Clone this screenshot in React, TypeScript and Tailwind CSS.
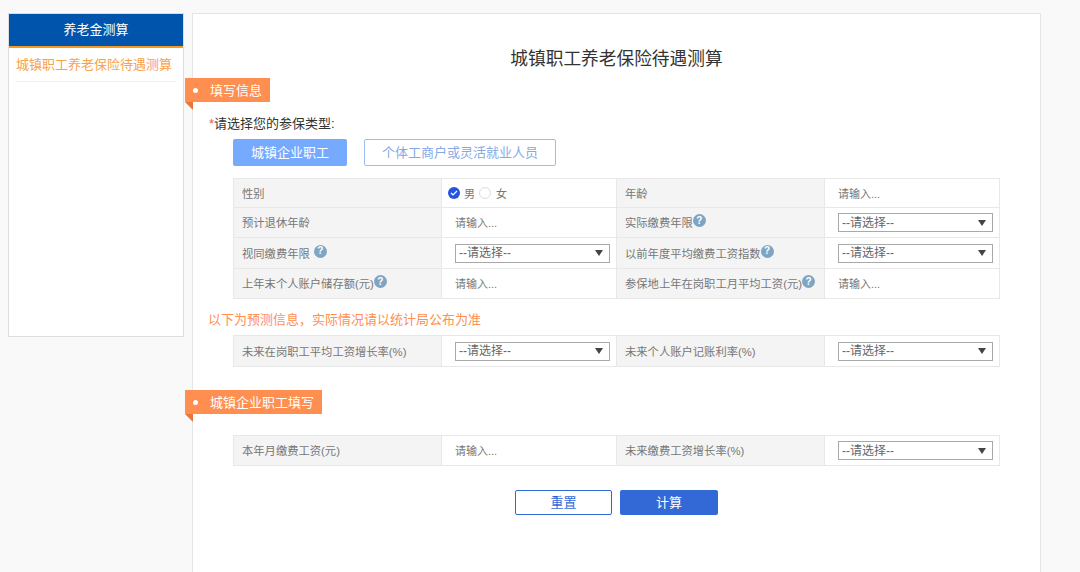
import { ReactNode } from 'react';

const font = { fontFamily: '"Liberation Sans", "Noto Sans CJK SC", sans-serif' };

function Help({ className = '' }: { className?: string }) {
  return (
    <span className={`inline-flex shrink-0 w-[13px] h-[13px] rounded-full bg-[#7fa5c4] text-white text-[10px] font-bold leading-none items-center justify-center align-top ${className}`}>
      ?
    </span>
  );
}

function Ribbon({ children, className = '' }: { children: ReactNode; className?: string }) {
  return (
    <div className={`relative -ml-[8px] flex items-center bg-[#ff8f50] text-white text-[13px] h-[24px] pl-[8px] pr-[8px] w-fit ${className}`}>
      <span className="w-[5px] h-[5px] rounded-full bg-white mr-[12px]" />
      <span className="pt-[2px]">{children}</span>
      <span className="absolute left-0 top-full border-t-[8px] border-l-[8px] border-t-[#e8783a] border-l-transparent" />
    </div>
  );
}

function Select() {
  return (
    <div className="flex items-center justify-between w-[155px] h-[19px] border border-[#a9a9a9] bg-white pl-[3px] pr-[6px] text-[12px] text-[#666]">
      <span>--请选择--</span>
      <svg width="8" height="6" viewBox="0 0 8 6"><path d="M0 0h8L4 6z" fill="#444" /></svg>
    </div>
  );
}

function Label({ children }: { children: ReactNode }) {
  return <div className="flex items-center h-full bg-[#f4f4f4] pl-[8px] pt-[2px] text-[11.3px] text-[#777] whitespace-nowrap">{children}</div>;
}

function Value({ children, tight = false }: { children: ReactNode; tight?: boolean }) {
  return (
    <div className={`flex items-center h-full border-l border-r border-[#e8e8e8] text-[11px] text-[#777] ${tight ? 'pl-[6px]' : 'pl-[13px]'}`}>
      {children}
    </div>
  );
}

function Placeholder() {
  return <span className="pt-[2px]">请输入...</span>;
}

function Row({ h, cells }: { h: string; cells: ReactNode[] }) {
  return (
    <div className={`grid grid-cols-[207px_176px_207px_176px] border-b border-[#e8e8e8] ${h}`}>
      {cells}
    </div>
  );
}

function Table({ children }: { children: ReactNode }) {
  return <div className="ml-[40px] w-[767px] border-t border-l border-[#e8e8e8]">{children}</div>;
}

export default function App() {
  return (
    <div className="h-[572px] overflow-hidden bg-[#f9f9f9] flex items-start pl-[8px] pt-[13px] gap-[8px]" style={font}>
      <aside className="w-[176px] h-[324px] bg-white border border-[#ddd]">
        <div className="h-[34px] bg-[#0054ab] border-b-2 border-[#f59a23] text-white text-[13px] flex items-center justify-center">
          养老金测算
        </div>
        <div className="mx-[7px] h-[34px] border-b border-[#eee] flex items-center text-[13px] text-[#f9a24a] whitespace-nowrap">
          城镇职工养老保险待遇测算
        </div>
      </aside>

      <main className="w-[849px] h-[600px] bg-white border border-[#e5e5e5]">
        <h1 className="text-center text-[17.7px] text-[#333] leading-[24px] mt-[33px]">城镇职工养老保险待遇测算</h1>

        <Ribbon className="mt-[7px]">填写信息</Ribbon>

        <div className="mt-[13px] ml-[16px] text-[13px] leading-[18px] text-[#333]">
          <span className="text-[#e55]">*</span>请选择您的参保类型:
        </div>
        <div className="mt-[6px] ml-[40px] flex gap-[17px]">
          <button className="w-[114px] h-[27px] rounded-[2px] bg-[#75aaff] text-white text-[13px]">城镇企业职工</button>
          <button className="w-[192px] h-[27px] rounded-[2px] border border-[#9dbdf5] text-[#86a9e6] text-[13px]">个体工商户或灵活就业人员</button>
        </div>

        <div className="mt-[12px]">
          <Table>
            <Row h="h-[29px]" cells={[
              <Label key="a">性别</Label>,
              <Value key="b" tight>
                <span className="w-[12px] h-[12px] rounded-full bg-[#2453e0] flex items-center justify-center">
                  <svg width="8" height="8" viewBox="0 0 8 8"><path d="M1 4l2 2 4-4" fill="none" stroke="#fff" strokeWidth="1.2" /></svg>
                </span>
                <span className="ml-[4px] pt-[2px]">男</span>
                <span className="ml-[4px] w-[12px] h-[12px] rounded-full border border-[#ddd]" />
                <span className="ml-[5px] pt-[2px]">女</span>
              </Value>,
              <Label key="c">年龄</Label>,
              <Value key="d"><Placeholder /></Value>,
            ]} />
            <Row h="h-[30px]" cells={[
              <Label key="a">预计退休年龄</Label>,
              <Value key="b"><Placeholder /></Value>,
              <Label key="c">实际缴费年限<Help className="-mt-[6px]" /></Label>,
              <Value key="d"><Select /></Value>,
            ]} />
            <Row h="h-[31px]" cells={[
              <Label key="a">视同缴费年限<Help className="ml-[4px] -mt-[6px]" /></Label>,
              <Value key="b"><Select /></Value>,
              <Label key="c">以前年度平均缴费工资指数<Help className="-mt-[6px]" /></Label>,
              <Value key="d"><Select /></Value>,
            ]} />
            <Row h="h-[30px]" cells={[
              <Label key="a">上年末个人账户储存额(元)<Help className="-mt-[6px]" /></Label>,
              <Value key="b"><Placeholder /></Value>,
              <Label key="c">参保地上年在岗职工月平均工资(元)<Help className="-mt-[6px]" /></Label>,
              <Value key="d"><Placeholder /></Value>,
            ]} />
          </Table>
        </div>

        <p className="mt-[12px] ml-[15px] text-[13px] leading-[18px] text-[#ff8f50]">以下为预测信息，实际情况请以统计局公布为准</p>

        <div className="mt-[6px]">
          <Table>
            <Row h="h-[31px]" cells={[
              <Label key="a">未来在岗职工平均工资增长率(%)</Label>,
              <Value key="b"><Select /></Value>,
              <Label key="c">未来个人账户记账利率(%)</Label>,
              <Value key="d"><Select /></Value>,
            ]} />
          </Table>
        </div>

        <Ribbon className="mt-[23px]">城镇企业职工填写</Ribbon>

        <div className="mt-[21px]">
          <Table>
            <Row h="h-[30px]" cells={[
              <Label key="a">本年月缴费工资(元)</Label>,
              <Value key="b"><Placeholder /></Value>,
              <Label key="c">未来缴费工资增长率(%)</Label>,
              <Value key="d"><Select /></Value>,
            ]} />
          </Table>
        </div>

        <div className="mt-[24px] ml-[322px] flex gap-[8px]">
          <button className="w-[97px] h-[25px] rounded-[2px] border border-[#3369d6] text-[#3369d6] text-[13px]">重置</button>
          <button className="w-[98px] h-[25px] rounded-[2px] bg-[#3369d6] text-white text-[13px]">计算</button>
        </div>
      </main>
    </div>
  );
}
